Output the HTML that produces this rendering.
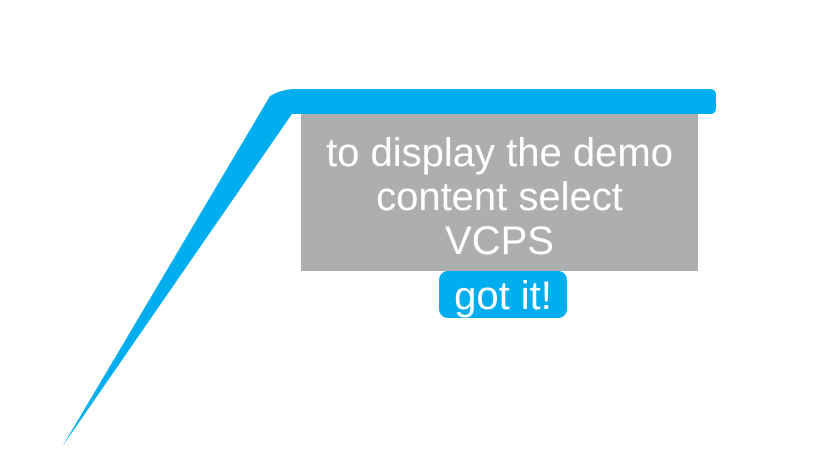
<!DOCTYPE html>
<html><head><style>
html,body{margin:0;padding:0;background:#fff;width:839px;height:454px;overflow:hidden;position:relative;font-family:"Liberation Sans",Arial,sans-serif}
#box{position:absolute;left:301px;top:114px;width:397px;height:157px;background:#adaeb0;color:#fff;font-size:40px;line-height:44px;text-align:center;box-sizing:border-box;padding-top:17px;white-space:nowrap}
#btn{position:absolute;left:439px;top:271px;width:128px;height:47px;background:#00aeef;border-radius:9px;color:#fff;font-size:40px;line-height:50px;text-align:center}
</style></head><body>
<svg width="839" height="454" style="position:absolute;left:0;top:0">
<path d="M62,447 L270,96 Q280,90 292,89 L710,89 Q716,89 716,95 L716,108 Q716,114 710,114 L292,114 Z" fill="#00aeef"/>
</svg>
<div id="box">to display the demo<br>content select<br>VCPS</div>
<div id="btn">got it!</div>
</body></html>
